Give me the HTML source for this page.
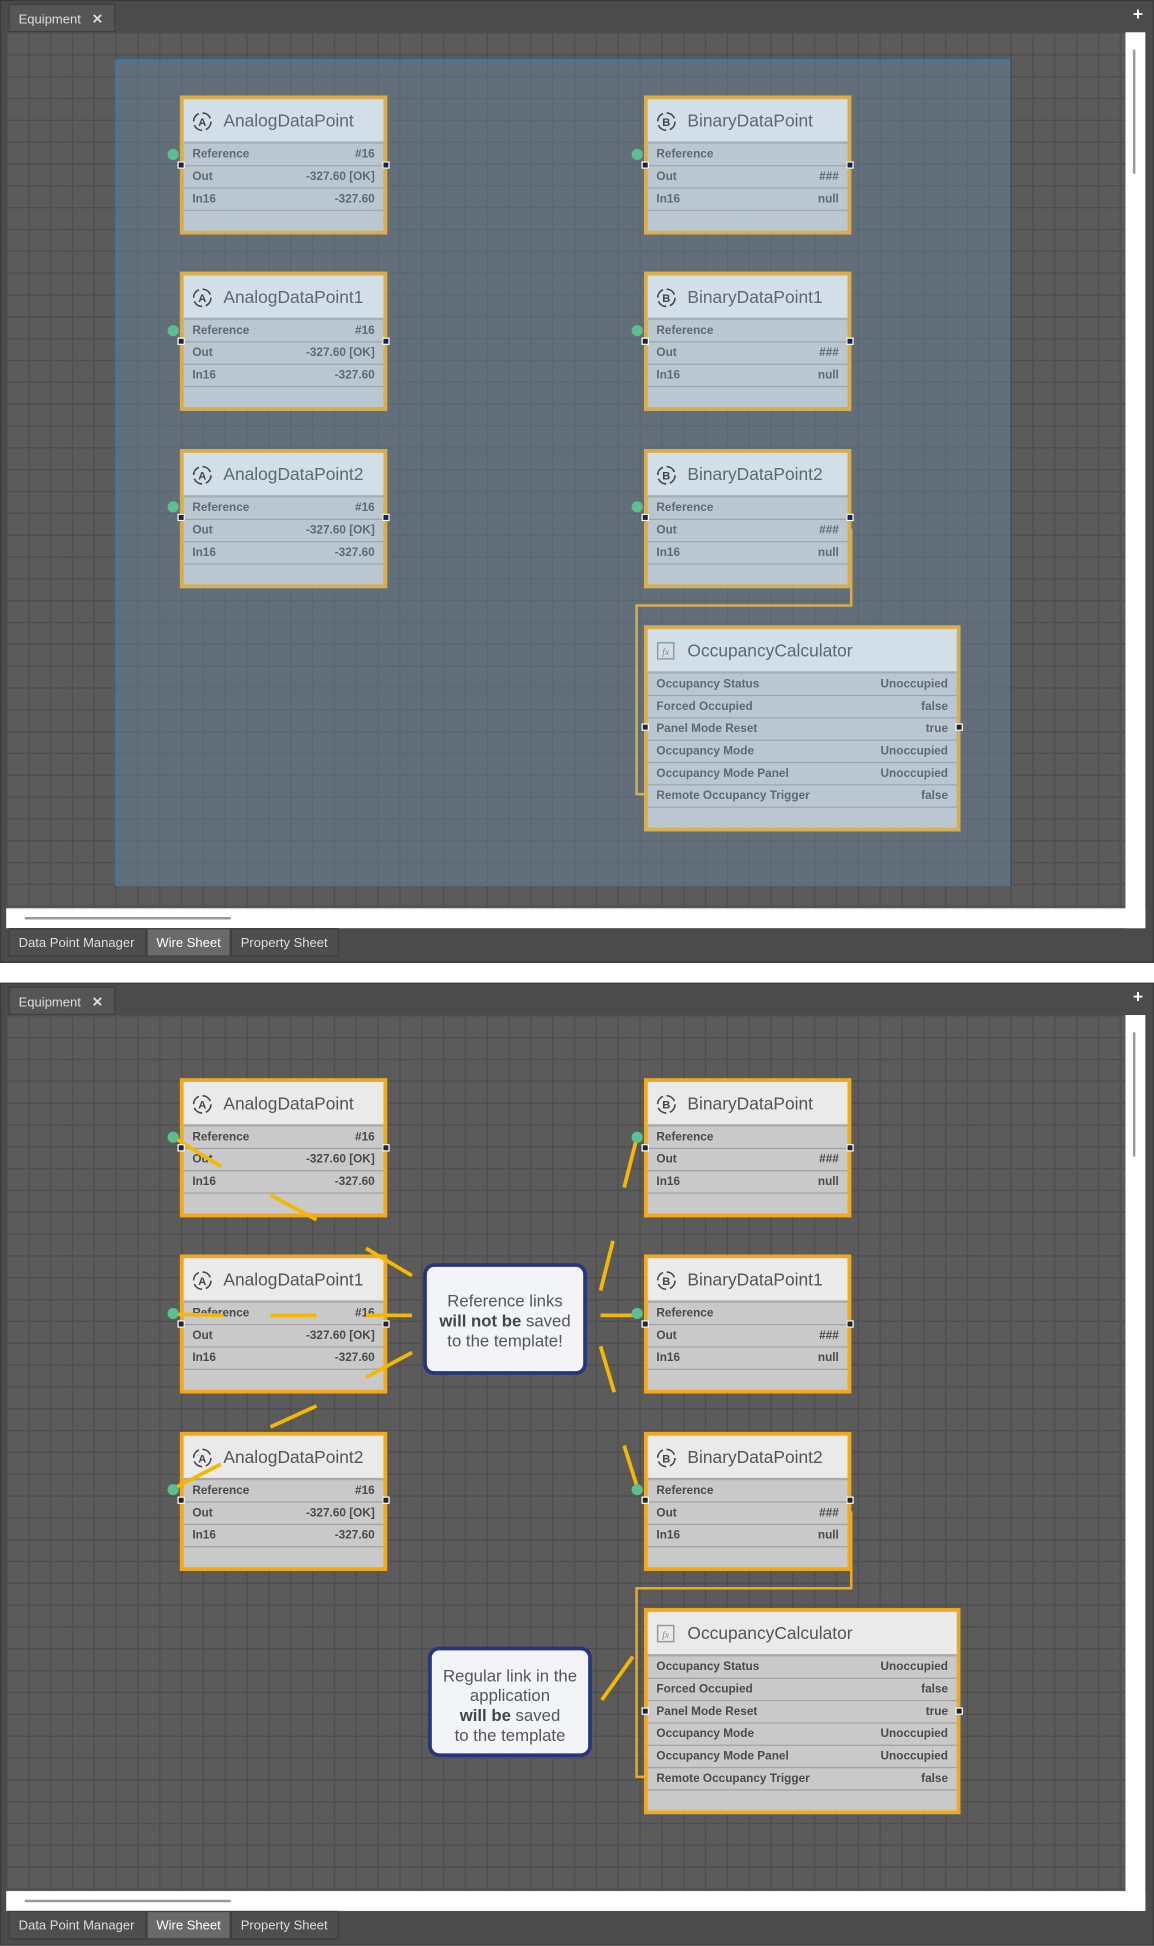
<!DOCTYPE html>
<html><head><meta charset="utf-8"><style>
*{margin:0;padding:0;box-sizing:border-box}
html,body{width:1154px;height:1946px;overflow:hidden;background:#fff}
#s{position:absolute;left:0;top:0;width:930px;height:1568px;transform:scale(1.24086);transform-origin:0 0;font-family:"Liberation Sans",sans-serif}
.a{position:absolute}
.frame{background:#4b4b4b;border:1px solid #3a3a3a}
.grid{background-color:#5b5b5b;background-image:linear-gradient(#4f4f4f 1px,transparent 1px),linear-gradient(90deg,#4f4f4f 1px,transparent 1px);background-size:17.6px 17.6px}
.tab{position:absolute;font-size:10.5px;color:#ddd;background:#555;border:1px solid #3e3e3e;padding:5px 7px;height:23px}
.node{position:absolute;width:167px;border:3px solid #d9ae4a;background:#bac6d0}
.node .h{height:36px;background:#d2dee8;border-bottom:2px solid #a3afb9;font-size:14px;color:#5d6873;padding:9px 0 0 32px;position:relative}
.node .h svg{position:absolute;left:6px;top:9px}
.node .r{height:18px;border-bottom:1px solid #9aa6b0;font-size:9.5px;font-weight:bold;color:#5e6974;padding:3px 7px 0 7px;display:flex;justify-content:space-between}
.node .e{height:16px}
.b .node{border-color:#f0a81c;background:#c9c9c9}
.b .node .h{background:#eaeaea;border-bottom-color:#aaa;color:#555}
.b .node .r{border-bottom-color:#a2a2a2;color:#4a4a4a}
.dot{position:absolute;width:9px;height:9px;border-radius:50%;background:#5bbf91}
.sq{position:absolute;width:6px;height:6px;background:#1e2630;border:1px solid #fff}
.call{position:absolute;background:#f3f4f8;border:3px solid #27347e;border-radius:9px;font-size:13.5px;color:#555;text-align:center;line-height:16px}
.call b{color:#444}
</style></head><body><div id="s">

<!-- TOP PANEL -->
<div class="a frame" style="left:0;top:0;width:930px;height:776px"></div>
<div class="tab" style="left:7px;top:3px;width:86px">Equipment &nbsp;&nbsp;<b style="font-size:11px">✕</b></div>
<div class="a" style="left:913px;top:3px;color:#fff;font-size:14px;font-weight:bold">+</div>
<div class="a grid" style="left:5px;top:26px;width:903px;height:707px"></div>
<div class="a" style="left:907px;top:26px;width:16px;height:722px;background:#fff"></div>
<div class="a" style="left:913px;top:40px;width:2px;height:100px;background:#999"></div>
<div class="a" style="left:5px;top:732px;width:918px;height:16px;background:#fff"></div>
<div class="a" style="left:20px;top:739px;width:166px;height:2px;background:#999"></div>
<div class="tab" style="left:7px;top:748px;width:111px;background:#4e4e4e">Data Point Manager</div>
<div class="tab" style="left:118px;top:748px;width:68px;background:#6a6a6a;color:#fff">Wire Sheet</div>
<div class="tab" style="left:186px;top:748px;width:87px;background:#4e4e4e">Property Sheet</div>
<div class="a" style="left:93px;top:48px;width:721px;height:666px;background:rgba(110,140,170,.42);border:1.5px solid #2a7fd0"></div>

<div id="tn">
<div class="node" style="left:145px;top:77px"><div class="h"><svg width="18" height="18" viewBox="0 0 18 18"><circle cx="9" cy="9" r="7" fill="none" stroke="#444" stroke-width="1.3" stroke-dasharray="8 3"/><text x="9" y="12.5" font-size="9" font-weight="bold" text-anchor="middle" fill="#444" font-family="Liberation Sans">A</text></svg>AnalogDataPoint</div><div class="r"><span>Reference</span><span>#16</span></div><div class="r"><span>Out</span><span>-327.60 [OK]</span></div><div class="r"><span>In16</span><span>-327.60</span></div><div class="e"></div></div>
<div class="node" style="left:145px;top:219px"><div class="h"><svg width="18" height="18" viewBox="0 0 18 18"><circle cx="9" cy="9" r="7" fill="none" stroke="#444" stroke-width="1.3" stroke-dasharray="8 3"/><text x="9" y="12.5" font-size="9" font-weight="bold" text-anchor="middle" fill="#444" font-family="Liberation Sans">A</text></svg>AnalogDataPoint1</div><div class="r"><span>Reference</span><span>#16</span></div><div class="r"><span>Out</span><span>-327.60 [OK]</span></div><div class="r"><span>In16</span><span>-327.60</span></div><div class="e"></div></div>
<div class="node" style="left:145px;top:362px"><div class="h"><svg width="18" height="18" viewBox="0 0 18 18"><circle cx="9" cy="9" r="7" fill="none" stroke="#444" stroke-width="1.3" stroke-dasharray="8 3"/><text x="9" y="12.5" font-size="9" font-weight="bold" text-anchor="middle" fill="#444" font-family="Liberation Sans">A</text></svg>AnalogDataPoint2</div><div class="r"><span>Reference</span><span>#16</span></div><div class="r"><span>Out</span><span>-327.60 [OK]</span></div><div class="r"><span>In16</span><span>-327.60</span></div><div class="e"></div></div>
<div class="node" style="left:519px;top:77px"><div class="h"><svg width="18" height="18" viewBox="0 0 18 18"><circle cx="9" cy="9" r="7" fill="none" stroke="#444" stroke-width="1.3" stroke-dasharray="8 3"/><text x="9" y="12.5" font-size="9" font-weight="bold" text-anchor="middle" fill="#444" font-family="Liberation Sans">B</text></svg>BinaryDataPoint</div><div class="r"><span>Reference</span><span></span></div><div class="r"><span>Out</span><span>###</span></div><div class="r"><span>In16</span><span>null</span></div><div class="e"></div></div>
<div class="node" style="left:519px;top:219px"><div class="h"><svg width="18" height="18" viewBox="0 0 18 18"><circle cx="9" cy="9" r="7" fill="none" stroke="#444" stroke-width="1.3" stroke-dasharray="8 3"/><text x="9" y="12.5" font-size="9" font-weight="bold" text-anchor="middle" fill="#444" font-family="Liberation Sans">B</text></svg>BinaryDataPoint1</div><div class="r"><span>Reference</span><span></span></div><div class="r"><span>Out</span><span>###</span></div><div class="r"><span>In16</span><span>null</span></div><div class="e"></div></div>
<div class="node" style="left:519px;top:362px"><div class="h"><svg width="18" height="18" viewBox="0 0 18 18"><circle cx="9" cy="9" r="7" fill="none" stroke="#444" stroke-width="1.3" stroke-dasharray="8 3"/><text x="9" y="12.5" font-size="9" font-weight="bold" text-anchor="middle" fill="#444" font-family="Liberation Sans">B</text></svg>BinaryDataPoint2</div><div class="r"><span>Reference</span><span></span></div><div class="r"><span>Out</span><span>###</span></div><div class="r"><span>In16</span><span>null</span></div><div class="e"></div></div>
<div class="node" style="left:519px;top:504px;width:255px"><div class="h"><svg width="18" height="18" viewBox="0 0 18 18"><rect x="2" y="2" width="13" height="13" fill="none" stroke="#999" stroke-width="1.2"/><text x="8.5" y="12" font-size="8" font-style="italic" text-anchor="middle" fill="#888" font-family="Liberation Serif">fx</text></svg>OccupancyCalculator</div><div class="r"><span>Occupancy Status</span><span>Unoccupied</span></div><div class="r"><span>Forced Occupied</span><span>false</span></div><div class="r"><span>Panel Mode Reset</span><span>true</span></div><div class="r"><span>Occupancy Mode</span><span>Unoccupied</span></div><div class="r"><span>Occupancy Mode Panel</span><span>Unoccupied</span></div><div class="r"><span>Remote Occupancy Trigger</span><span>false</span></div><div class="e"></div></div>
</div>
<svg class="a" style="left:0;top:0" width="930" height="780"><polyline points="686,426 686,488 513,488 513,640 520,640" fill="none" stroke="#d9ae4a" stroke-width="2"/></svg>
<div class="dot" style="left:135px;top:120px"></div><div class="dot" style="left:135px;top:262px"></div><div class="dot" style="left:135px;top:404px"></div>
<div class="dot" style="left:509px;top:120px"></div><div class="dot" style="left:509px;top:262px"></div><div class="dot" style="left:509px;top:404px"></div>
<div class="sq" style="left:143px;top:130px"></div><div class="sq" style="left:308px;top:130px"></div><div class="sq" style="left:143px;top:272px"></div><div class="sq" style="left:308px;top:272px"></div><div class="sq" style="left:143px;top:414px"></div><div class="sq" style="left:308px;top:414px"></div>
<div class="sq" style="left:517px;top:130px"></div><div class="sq" style="left:682px;top:130px"></div><div class="sq" style="left:517px;top:272px"></div><div class="sq" style="left:682px;top:272px"></div><div class="sq" style="left:517px;top:414px"></div><div class="sq" style="left:682px;top:414px"></div>
<div class="sq" style="left:517px;top:583px"></div><div class="sq" style="left:770px;top:583px"></div>

<!-- BOTTOM PANEL -->
<div class="a frame" style="left:0;top:792px;width:930px;height:776px"></div>
<div class="tab" style="left:7px;top:795px;width:86px">Equipment &nbsp;&nbsp;<b style="font-size:11px">✕</b></div>
<div class="a" style="left:913px;top:795px;color:#fff;font-size:14px;font-weight:bold">+</div>
<div class="a grid" style="left:5px;top:818px;width:903px;height:707px"></div>
<div class="a" style="left:907px;top:818px;width:16px;height:722px;background:#fff"></div>
<div class="a" style="left:913px;top:832px;width:2px;height:100px;background:#999"></div>
<div class="a" style="left:5px;top:1524px;width:918px;height:16px;background:#fff"></div>
<div class="a" style="left:20px;top:1531px;width:166px;height:2px;background:#999"></div>
<div class="tab" style="left:7px;top:1540px;width:111px;background:#4e4e4e">Data Point Manager</div>
<div class="tab" style="left:118px;top:1540px;width:68px;background:#6a6a6a;color:#fff">Wire Sheet</div>
<div class="tab" style="left:186px;top:1540px;width:87px;background:#4e4e4e">Property Sheet</div>

<div class="b">
<div class="node" style="left:145px;top:869px"><div class="h"><svg width="18" height="18" viewBox="0 0 18 18"><circle cx="9" cy="9" r="7" fill="none" stroke="#444" stroke-width="1.3" stroke-dasharray="8 3"/><text x="9" y="12.5" font-size="9" font-weight="bold" text-anchor="middle" fill="#444" font-family="Liberation Sans">A</text></svg>AnalogDataPoint</div><div class="r"><span>Reference</span><span>#16</span></div><div class="r"><span>Out</span><span>-327.60 [OK]</span></div><div class="r"><span>In16</span><span>-327.60</span></div><div class="e"></div></div>
<div class="node" style="left:145px;top:1011px"><div class="h"><svg width="18" height="18" viewBox="0 0 18 18"><circle cx="9" cy="9" r="7" fill="none" stroke="#444" stroke-width="1.3" stroke-dasharray="8 3"/><text x="9" y="12.5" font-size="9" font-weight="bold" text-anchor="middle" fill="#444" font-family="Liberation Sans">A</text></svg>AnalogDataPoint1</div><div class="r"><span>Reference</span><span>#16</span></div><div class="r"><span>Out</span><span>-327.60 [OK]</span></div><div class="r"><span>In16</span><span>-327.60</span></div><div class="e"></div></div>
<div class="node" style="left:145px;top:1154px"><div class="h"><svg width="18" height="18" viewBox="0 0 18 18"><circle cx="9" cy="9" r="7" fill="none" stroke="#444" stroke-width="1.3" stroke-dasharray="8 3"/><text x="9" y="12.5" font-size="9" font-weight="bold" text-anchor="middle" fill="#444" font-family="Liberation Sans">A</text></svg>AnalogDataPoint2</div><div class="r"><span>Reference</span><span>#16</span></div><div class="r"><span>Out</span><span>-327.60 [OK]</span></div><div class="r"><span>In16</span><span>-327.60</span></div><div class="e"></div></div>
<div class="node" style="left:519px;top:869px"><div class="h"><svg width="18" height="18" viewBox="0 0 18 18"><circle cx="9" cy="9" r="7" fill="none" stroke="#444" stroke-width="1.3" stroke-dasharray="8 3"/><text x="9" y="12.5" font-size="9" font-weight="bold" text-anchor="middle" fill="#444" font-family="Liberation Sans">B</text></svg>BinaryDataPoint</div><div class="r"><span>Reference</span><span></span></div><div class="r"><span>Out</span><span>###</span></div><div class="r"><span>In16</span><span>null</span></div><div class="e"></div></div>
<div class="node" style="left:519px;top:1011px"><div class="h"><svg width="18" height="18" viewBox="0 0 18 18"><circle cx="9" cy="9" r="7" fill="none" stroke="#444" stroke-width="1.3" stroke-dasharray="8 3"/><text x="9" y="12.5" font-size="9" font-weight="bold" text-anchor="middle" fill="#444" font-family="Liberation Sans">B</text></svg>BinaryDataPoint1</div><div class="r"><span>Reference</span><span></span></div><div class="r"><span>Out</span><span>###</span></div><div class="r"><span>In16</span><span>null</span></div><div class="e"></div></div>
<div class="node" style="left:519px;top:1154px"><div class="h"><svg width="18" height="18" viewBox="0 0 18 18"><circle cx="9" cy="9" r="7" fill="none" stroke="#444" stroke-width="1.3" stroke-dasharray="8 3"/><text x="9" y="12.5" font-size="9" font-weight="bold" text-anchor="middle" fill="#444" font-family="Liberation Sans">B</text></svg>BinaryDataPoint2</div><div class="r"><span>Reference</span><span></span></div><div class="r"><span>Out</span><span>###</span></div><div class="r"><span>In16</span><span>null</span></div><div class="e"></div></div>
<div class="node" style="left:519px;top:1296px;width:255px"><div class="h"><svg width="18" height="18" viewBox="0 0 18 18"><rect x="2" y="2" width="13" height="13" fill="none" stroke="#999" stroke-width="1.2"/><text x="8.5" y="12" font-size="8" font-style="italic" text-anchor="middle" fill="#888" font-family="Liberation Serif">fx</text></svg>OccupancyCalculator</div><div class="r"><span>Occupancy Status</span><span>Unoccupied</span></div><div class="r"><span>Forced Occupied</span><span>false</span></div><div class="r"><span>Panel Mode Reset</span><span>true</span></div><div class="r"><span>Occupancy Mode</span><span>Unoccupied</span></div><div class="r"><span>Occupancy Mode Panel</span><span>Unoccupied</span></div><div class="r"><span>Remote Occupancy Trigger</span><span>false</span></div><div class="e"></div></div>
</div>
<svg class="a" style="left:0;top:0" width="930" height="1568"><polyline points="686,1218 686,1280 513,1280 513,1432 520,1432" fill="none" stroke="#f0a81c" stroke-width="2"/>
<g stroke="#f5b800" stroke-width="3" fill="none">
<line x1="139" y1="916" x2="178" y2="940"/><line x1="218" y1="963" x2="255" y2="983"/><line x1="295" y1="1006" x2="332" y2="1028"/>
<line x1="139" y1="1059" x2="180" y2="1060"/><line x1="218" y1="1060" x2="255" y2="1060"/><line x1="295" y1="1060" x2="332" y2="1060"/>
<line x1="295" y1="1110" x2="332" y2="1090"/><line x1="218" y1="1150" x2="255" y2="1133"/><line x1="139" y1="1200" x2="178" y2="1180"/>
<line x1="503" y1="957" x2="514" y2="914"/><line x1="484" y1="1040" x2="494" y2="1000"/><line x1="484" y1="1060" x2="513" y2="1060"/><line x1="484" y1="1085" x2="495" y2="1122"/><line x1="503" y1="1165" x2="514" y2="1200"/>
<line x1="485" y1="1370" x2="510" y2="1335"/></g></svg>
<div class="dot" style="left:135px;top:912px"></div><div class="dot" style="left:135px;top:1054px"></div><div class="dot" style="left:135px;top:1196px"></div>
<div class="dot" style="left:509px;top:912px"></div><div class="dot" style="left:509px;top:1054px"></div><div class="dot" style="left:509px;top:1196px"></div>
<div class="sq" style="left:143px;top:922px"></div><div class="sq" style="left:308px;top:922px"></div><div class="sq" style="left:143px;top:1064px"></div><div class="sq" style="left:308px;top:1064px"></div><div class="sq" style="left:143px;top:1206px"></div><div class="sq" style="left:308px;top:1206px"></div>
<div class="sq" style="left:517px;top:922px"></div><div class="sq" style="left:682px;top:922px"></div><div class="sq" style="left:517px;top:1064px"></div><div class="sq" style="left:682px;top:1064px"></div><div class="sq" style="left:517px;top:1206px"></div><div class="sq" style="left:682px;top:1206px"></div>
<div class="sq" style="left:517px;top:1376px"></div><div class="sq" style="left:770px;top:1376px"></div>

<div class="call" style="left:341px;top:1018px;width:132px;height:90px;padding-top:20px">Reference links<br><b>will not be</b> saved<br>to the template!</div>
<div class="call" style="left:345px;top:1327px;width:132px;height:89px;padding-top:13px">Regular link in the<br>application<br><b>will be</b> saved<br>to the template</div>
</div></body></html>
